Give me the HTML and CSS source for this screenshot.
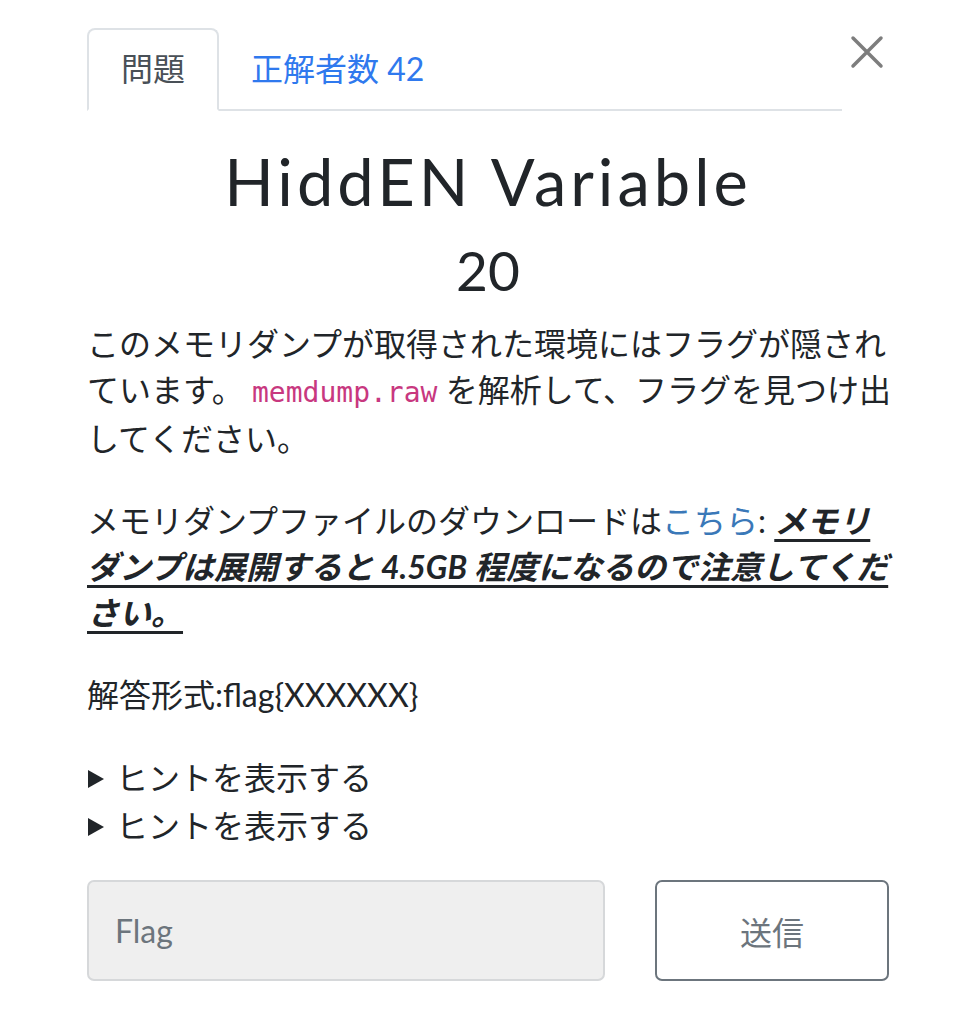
FILE: index.html
```html
<!DOCTYPE html>
<html lang="ja">
<head>
<meta charset="utf-8">
<link rel="stylesheet" href="styles.css">
</head>
<body>
<div class="modal">
  <div class="head">
    <ul class="tabs">
      <li class="tab active">問題</li>
      <li class="tab link">正解者数 42</li>
    </ul>
    <button class="close" aria-label="close">
      <svg width="34" height="34" viewBox="0 0 34 34"><path d="M3 3 L31 31 M31 3 L3 31" stroke="#7d7d7d" stroke-width="3.5" stroke-linecap="round"/></svg>
    </button>
  </div>
  <h3 class="name">HiddEN Variable</h3>
  <h4 class="value">20</h4>
  <div class="desc">
    <p>このメモリダンプが取得された環境にはフラグが隠されています。 <code>memdump.raw</code> を解析して、フラグを見つけ出してください。</p>
    <p>メモリダンプファイルのダウンロードは<a href="#">こちら</a>: <u><strong><em>メモリダンプは展開すると 4.5GB 程度になるので注意してください。 </em></strong></u></p>
    <p>解答形式:flag{XXXXXX}</p>
  </div>
  <div class="hints">
    <details><summary>ヒントを表示する</summary></details>
    <details><summary>ヒントを表示する</summary></details>
  </div>
  <div class="submit">
    <input class="flag" type="text" placeholder="Flag">
    <button class="send">送信</button>
  </div>
</div>
</body>
</html>
```

FILE: styles.css
```css
html, body {
  margin: 0;
  padding: 0;
  background: #fff;
}
body {
  font-family: Lato, "Noto Sans CJK JP", sans-serif;
  color: #212529;
  font-size: 32px;
}
.modal {
  width: 802px;
  margin-left: 87px;
  padding-top: 28px;
}
.head {
  display: flex;
  align-items: flex-start;
}
.tabs {
  list-style: none;
  margin: 0;
  padding: 0;
  display: flex;
  flex: 0 0 755px;
  border-bottom: 2px solid #dee2e6;
  height: 81px;
}
.tab {
  font-size: 32px;
  line-height: 44px;
  padding: 17px 32px 20px;
  border: 2px solid transparent;
  border-top-left-radius: 8px;
  border-top-right-radius: 8px;
  margin-bottom: -2px;
}
.tab.active {
  color: #495057;
  border-color: #dee2e6 #dee2e6 #fff;
  background: #fff;
}
.tab.link {
  color: #2f79ee;
  padding-left: 30px;
}
.close {
  margin-left: 8px;
  margin-top: 7px;
  background: none;
  border: 0;
  padding: 0;
  width: 34px;
  height: 34px;
  display: flex;
}
.name {
  margin: 26px 0 0;
  text-align: center;
  font-weight: 400;
  font-size: 65px;
  line-height: 88px;
  letter-spacing: 4px;
}
.value {
  margin: 9px 0 15px;
  text-align: center;
  font-weight: 400;
  font-size: 55px;
  line-height: 72px;
}
.desc {
  margin-right: -6px;
}
.desc p {
  margin: 0 0 36px;
  line-height: 46px;
}
code {
  font-family: "DejaVu Sans Mono", monospace;
  font-size: 28px;
  color: #c8387f;
}
a {
  color: #3a78b8;
  text-decoration: none;
}
u {
  text-decoration-thickness: 3px;
  text-underline-offset: 6px;
}
details summary {
  line-height: 48px;
  cursor: pointer;
  list-style: none;
  display: flex;
  align-items: center;
}
details summary::-webkit-details-marker {
  display: none;
}
details summary::before {
  content: "";
  width: 0;
  height: 0;
  border-left: 16px solid #212529;
  border-top: 9px solid transparent;
  border-bottom: 9px solid transparent;
  margin: 2px 12px 0 1px;
}
.submit {
  display: flex;
  gap: 50px;
  margin-top: 30px;
}
.flag {
  flex: 0 0 518px;
  box-sizing: border-box;
  height: 101px;
  background: #efefef;
  border: 2px solid #d6d8da;
  border-radius: 7px;
  padding: 0 26px;
  font-family: Lato, "Noto Sans CJK JP", sans-serif;
  font-size: 32px;
  color: #495057;
}
.flag::placeholder {
  color: #6c757d;
}
.send {
  flex: 1;
  box-sizing: border-box;
  height: 101px;
  background: #fff;
  border: 2px solid #6c757d;
  border-radius: 7px;
  font-family: Lato, "Noto Sans CJK JP", sans-serif;
  font-size: 32px;
  color: #6c757d;
}
```
